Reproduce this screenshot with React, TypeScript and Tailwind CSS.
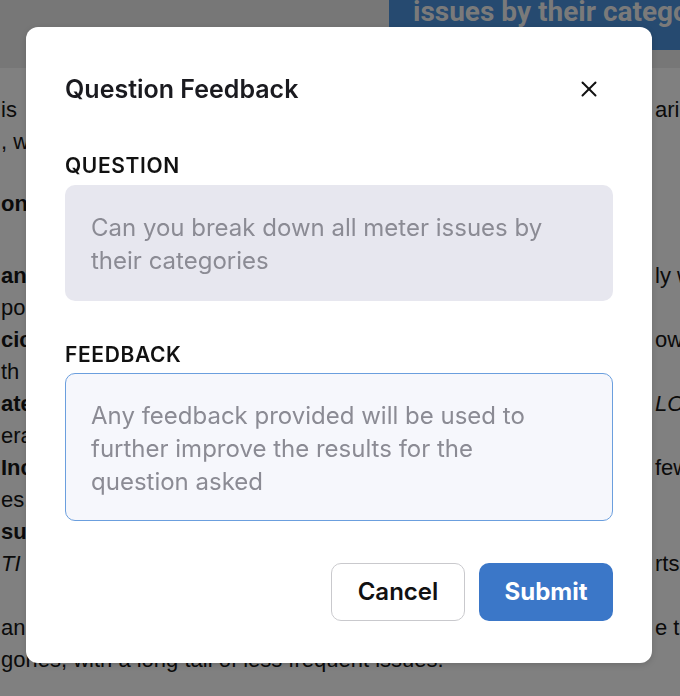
import React from 'react';

// Background page rows (mostly covered by the dialog)
const rows = [
    { left: 'is', right: 'ario', mt: '', lb: false, li: false, ri: false },
    { left: ', w', right: '', mt: '', lb: false, li: false, ri: false },
    { left: 'on', right: '', mt: 'mt-[30px]', lb: true, li: false, ri: false },
    { left: 'ant', right: 'ly w', mt: 'mt-[40px]', lb: true, li: false, ri: false },
    { left: 'por', right: '', mt: '', lb: false, li: false, ri: false },
    { left: 'cic', right: 'ow', mt: '', lb: true, li: false, ri: false },
    { left: 'th', right: '', mt: '', lb: false, li: false, ri: false },
    { left: 'ate', right: 'LO', mt: '', lb: true, li: false, ri: true },
    { left: 'era', right: '', mt: '', lb: false, li: false, ri: false },
    { left: 'Inc', right: 'few', mt: '', lb: true, li: false, ri: false },
    { left: 'es,', right: '', mt: '', lb: false, li: false, ri: false },
    { left: 'su', right: '', mt: '', lb: true, li: false, ri: false },
    { left: 'TI', right: 'rts', mt: '', lb: false, li: true, ri: false },
    { left: 'an', right: 'e t', mt: 'mt-[32px]', lb: false, li: false, ri: false },
    { left: 'gories, with a long tail of less frequent issues.', right: '', mt: '', lb: false, li: false, ri: false },
];

function CloseIcon() {
    return (
        <svg width="16" height="16" viewBox="0 0 16 16" fill="none" stroke="#111" strokeWidth="2" strokeLinecap="round">
            <line x1="1.5" y1="1.5" x2="14.5" y2="14.5" />
            <line x1="14.5" y1="1.5" x2="1.5" y2="14.5" />
        </svg>
    );
}

export default function App() {
    return (
        <div className="relative w-full min-h-screen overflow-hidden bg-[#808080] font-['Liberation_Sans',Arial,sans-serif]">
            {/* Page header (dimmed) */}
            <div className="flex h-[68px] justify-end bg-[#777777]">
                <div className="h-[50px] w-[291px] overflow-hidden bg-[#264a70] pl-[24px]">
                    <div className="-mt-[8px] whitespace-nowrap font-['Roboto',sans-serif] text-[28px] font-bold leading-[40px] text-[#7a7a7a]">
                        issues by their categories
                    </div>
                </div>
            </div>

            {/* Page body (dimmed) */}
            <div className="pt-[26px] text-[22px] text-[#0b0b0b]">
                {rows.map((r, i) => (
                    <div key={i} className={`flex h-[32px] whitespace-nowrap leading-[32px] ${r.mt}`}>
                        <span className={`w-[655px] shrink-0 pl-[1px] ${r.lb ? 'font-bold' : ''} ${r.li ? 'italic' : ''}`}>
                            {r.left}
                        </span>
                        <span className={r.ri ? 'italic' : ''}>{r.right}</span>
                    </div>
                ))}
            </div>

            {/* Dialog */}
            <div className="fixed left-[26px] top-[27px] w-[626px] rounded-[12px] bg-white px-[39px] pb-[42px] pt-[47px] font-['Inter',sans-serif] shadow-[0_2px_6px_rgba(0,0,0,0.15)]">
                <div className="flex h-[30px] items-center justify-between">
                    <h2 className="text-[25px] font-semibold leading-[30px] text-[#1a1a1f]">Question Feedback</h2>
                    <button className="mr-[16px] flex items-center justify-center">
                        <CloseIcon />
                    </button>
                </div>

                <div className="mt-[49px] text-[21px] font-semibold uppercase leading-[26px] tracking-[0.03em] text-[#111]">
                    Question
                </div>
                <div className="mt-[6px] rounded-[10px] bg-[#e7e7ef] pb-[24px] pl-[26px] pr-[45px] pt-[26px] text-[24px] leading-[33px] text-[#8b8b94]">
                    Can you break down all meter issues by their categories
                </div>

                <div className="mt-[41px] text-[21px] font-semibold uppercase leading-[26px] tracking-[0.03em] text-[#111]">
                    Feedback
                </div>
                <textarea
                    className="mt-[5px] block h-[148px] w-full resize-none rounded-[10px] border border-[#6b9fde] bg-[#f6f7fc] pl-[25px] pr-[45px] pt-[25px] text-[24px] leading-[33px] text-[#333] outline-none placeholder:text-[#8b8b94]"
                    placeholder="Any feedback provided will be used to further improve the results for the question asked"
                />

                <div className="mt-[42px] flex justify-end gap-[14px]">
                    <button className="h-[58px] w-[134px] rounded-[10px] border border-[#c9c9cd] bg-white text-[24px] font-semibold text-[#111]">
                        Cancel
                    </button>
                    <button className="h-[58px] w-[134px] rounded-[10px] bg-[#3b77c8] text-[24px] font-bold text-white">
                        Submit
                    </button>
                </div>
            </div>
        </div>
    );
}
